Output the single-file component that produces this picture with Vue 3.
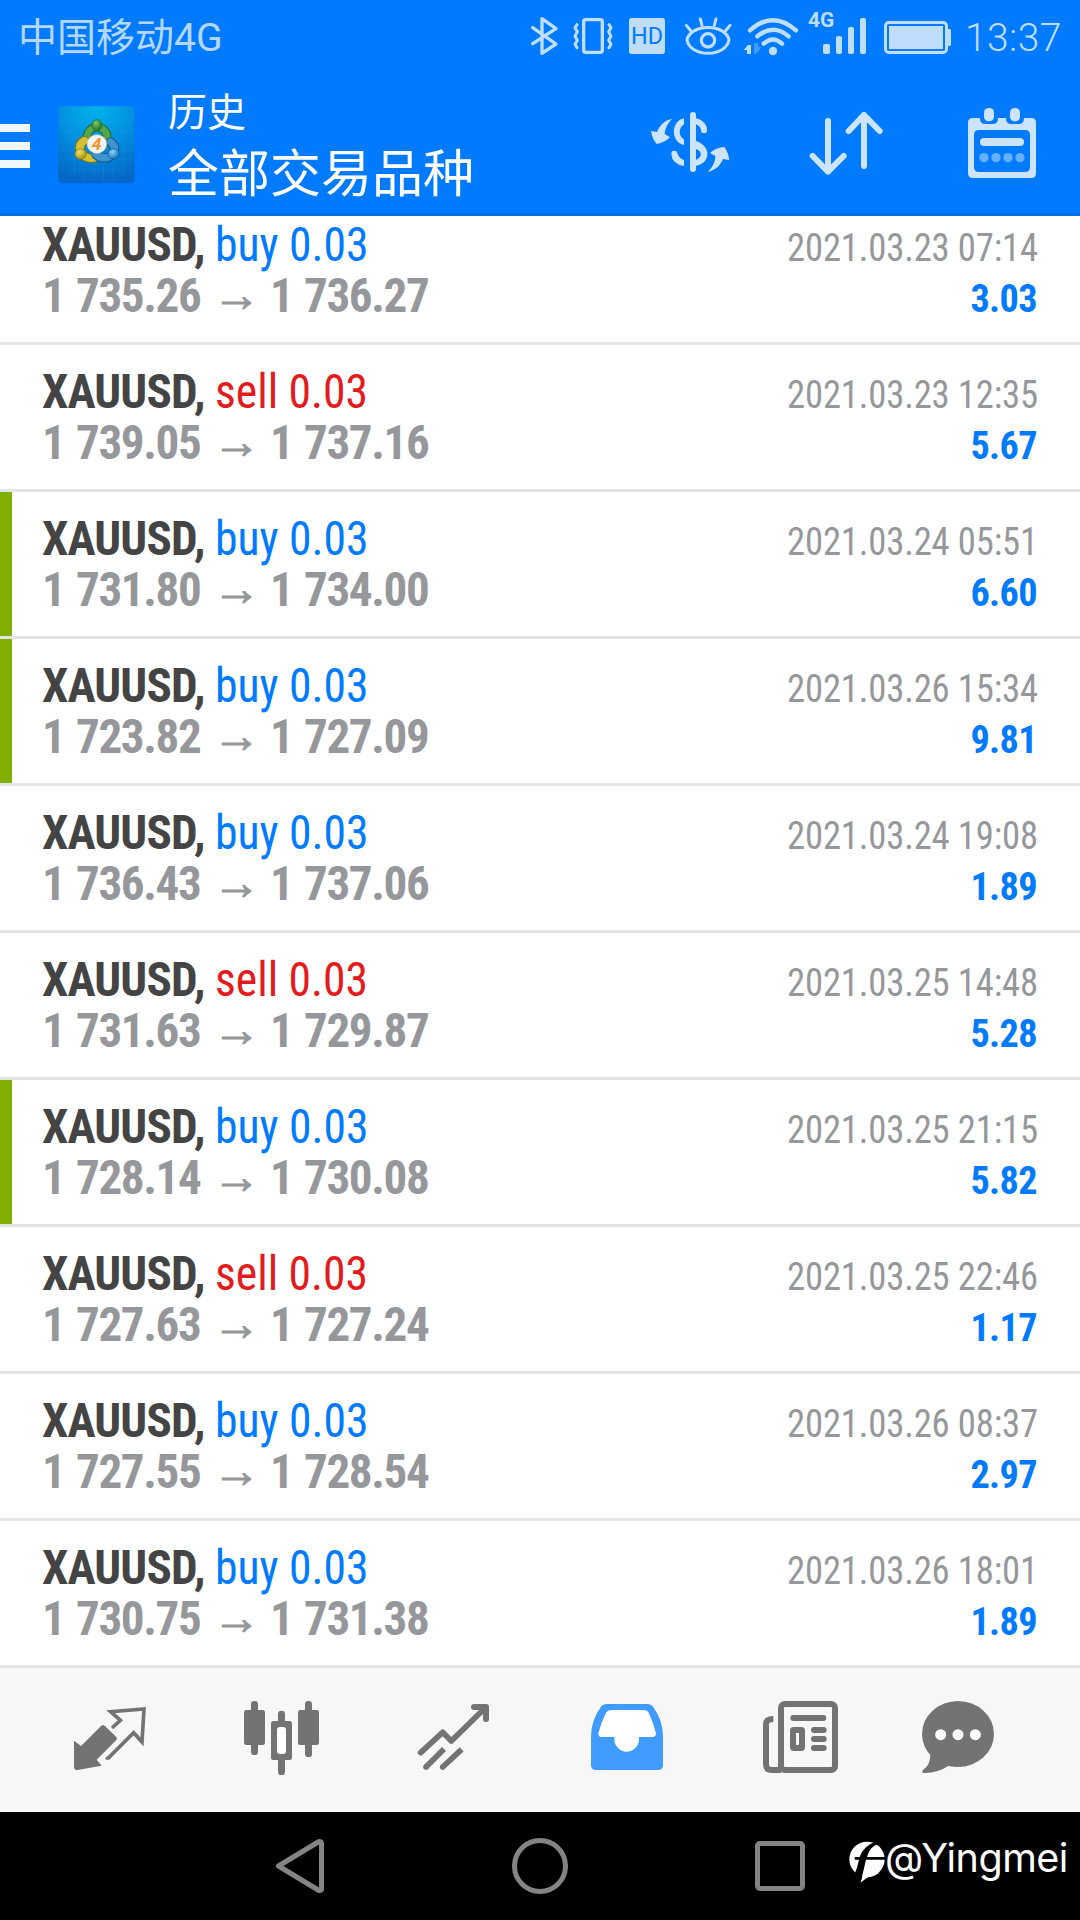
<script setup>
const deals = [
  { side: 'buy', open: '1 735.26', close: '1 736.27', time: '2021.03.23 07:14', profit: '3.03', tp: false },
  { side: 'sell', open: '1 739.05', close: '1 737.16', time: '2021.03.23 12:35', profit: '5.67', tp: false },
  { side: 'buy', open: '1 731.80', close: '1 734.00', time: '2021.03.24 05:51', profit: '6.60', tp: true },
  { side: 'buy', open: '1 723.82', close: '1 727.09', time: '2021.03.26 15:34', profit: '9.81', tp: true },
  { side: 'buy', open: '1 736.43', close: '1 737.06', time: '2021.03.24 19:08', profit: '1.89', tp: false },
  { side: 'sell', open: '1 731.63', close: '1 729.87', time: '2021.03.25 14:48', profit: '5.28', tp: false },
  { side: 'buy', open: '1 728.14', close: '1 730.08', time: '2021.03.25 21:15', profit: '5.82', tp: true },
  { side: 'sell', open: '1 727.63', close: '1 727.24', time: '2021.03.25 22:46', profit: '1.17', tp: false },
  { side: 'buy', open: '1 727.55', close: '1 728.54', time: '2021.03.26 08:37', profit: '2.97', tp: false },
  { side: 'buy', open: '1 730.75', close: '1 731.38', time: '2021.03.26 18:01', profit: '1.89', tp: false },
]
</script>

<template>
  <div class="screen">
    <header class="header">
      <div class="status">
        <span class="carrier">中国移动4G</span>
        <div class="status-icons">
          <svg class="bt" width="29" height="44" viewBox="30 39 87 132" fill="none" stroke="currentColor" stroke-width="10" stroke-linejoin="round" stroke-linecap="round">
            <path d="M38 83L108 132L66 160V56L108 86L38 131" />
          </svg>
          <svg class="vib" width="42" height="44" viewBox="156 39 126 132" fill="none" stroke="currentColor" stroke-linejoin="round" stroke-linecap="round">
            <rect x="191" y="59" width="56" height="98" rx="6" stroke-width="10" />
            <path stroke-width="9" d="M171 74L165 83L172 95L165 109L172 121L165 133L171 143M267 74L273 83L266 95L273 109L266 121L273 133L267 143" />
          </svg>
          <svg class="hd" width="38" height="44" viewBox="324 39 114 132">
            <rect x="327" y="54" width="108" height="108" rx="8" fill="currentColor" />
            <text x="381" y="132" text-anchor="middle" font-size="74" textLength="96" lengthAdjust="spacingAndGlyphs" fill="#007aff">HD</text>
          </svg>
          <svg class="eye" width="48" height="44" viewBox="492 39 144 132" fill="none" stroke="currentColor" stroke-width="9" stroke-linecap="round">
            <path d="M501 120C511 70 617 70 627 120C617 173 511 173 501 120Z" />
            <circle cx="564" cy="121" r="20" stroke-width="10" />
            <path d="M499 76L513 93M541 57L546 76M588 57L583 76M630 76L616 93" />
          </svg>
          <svg class="wifi" width="56" height="44" viewBox="669 39 168 132" fill="none" stroke="currentColor" stroke-width="13" stroke-linecap="round">
            <path d="M690 91Q759 30 828 91M712 109Q759 70 806 109M731 131Q759 106 786 131" />
            <circle cx="759" cy="153" r="12.5" fill="currentColor" stroke="none" />
            <path d="M671 150L684 135H693V162H681V150Z" fill="currentColor" stroke="none" />
            <path d="M702 129H714V138L724 142L708 162H702Z" fill="#409bff" stroke="none" />
          </svg>
          <svg class="signal" width="59" height="54" viewBox="24 9 177 162" fill="currentColor">
            <text x="24" y="80" font-size="59" font-weight="700" textLength="79" lengthAdjust="spacingAndGlyphs">4G</text>
            <rect x="69" y="132" width="21" height="30" rx="6" />
            <rect x="108" y="108" width="18" height="54" rx="6" />
            <rect x="144" y="81" width="18" height="81" rx="6" />
            <rect x="180" y="54" width="18" height="108" rx="6" />
          </svg>
          <svg class="battery" width="69" height="44" viewBox="249 39 207 132" fill="currentColor">
            <rect x="256.5" y="67.500" width="183" height="90" rx="10" fill="none" stroke="currentColor" stroke-width="9" />
            <rect x="267" y="78" width="162" height="69" />
            <path d="M444 87H449Q453 87 453 92V133Q453 138 449 138H444Z" />
          </svg>
        </div>
        <span class="clock">13:37</span>
      </div>

      <div class="toolbar">
        <div class="burger"><i></i><i></i><i></i></div>
        <svg class="logo" width="77" height="78" viewBox="168 318 222 234" preserveAspectRatio="none">
          <defs>
            <radialGradient id="tile" cx=".5" cy="0" r="1">
              <stop offset="0" stop-color="#00b4ea" />
              <stop offset=".5" stop-color="#0390e0" />
              <stop offset="1" stop-color="#0468c6" />
            </radialGradient>
            <radialGradient id="green" cx=".4" cy=".3" r=".7"><stop offset="0" stop-color="#7cc86c" /><stop offset="1" stop-color="#1f7428" /></radialGradient>
            <radialGradient id="yellow" cx=".4" cy=".3" r=".7"><stop offset="0" stop-color="#f0e260" /><stop offset="1" stop-color="#a89010" /></radialGradient>
            <radialGradient id="blue" cx=".4" cy=".3" r=".7"><stop offset="0" stop-color="#8ed3f7" /><stop offset="1" stop-color="#1272b9" /></radialGradient>
          </defs>
          <rect x="169" y="323" width="219" height="227" rx="12" fill="#0056b4" opacity=".55" />
          <rect x="169" y="319" width="219" height="226" rx="12" fill="url(#tile)" />
          <path d="M215 320V544M243 320V544M271 320V544M299 320V544M327 320V544M355 320V544M170 366H388M170 394H388M170 422H388M170 450H388M170 479H388M170 508H388" stroke="#6fd0ff" stroke-opacity=".12" stroke-width="2" fill="none" />
          <g stroke-linecap="round" fill="none">
            <path d="M252 408A29 31 0 0 1 308 402Q312 420 304 430" stroke="#1c6a2c" stroke-width="26" />
            <path d="M252 408A29 31 0 0 1 308 402Q312 420 304 430" stroke="#55a64a" stroke-width="20" />
            <path d="M244 422Q226 432 233 456Q246 478 272 474" stroke="#84760f" stroke-width="28" />
            <path d="M244 422Q226 432 233 456Q246 478 272 474" stroke="#d2c136" stroke-width="22" />
            <path d="M278 464Q292 478 316 471Q334 458 330 438L320 426" stroke="#0e5692" stroke-width="28" />
            <path d="M278 464Q292 478 316 471Q334 458 330 438L320 426" stroke="#3f94cd" stroke-width="22" />
          </g>
          <ellipse cx="280" cy="376" rx="14" ry="17" fill="url(#green)" stroke="#1c6a2c" stroke-width="2" />
          <circle cx="233" cy="462" r="16" fill="url(#yellow)" stroke="#84760f" stroke-width="2" />
          <circle cx="328" cy="462" r="16" fill="url(#blue)" stroke="#0e5692" stroke-width="2" />
          <circle cx="280" cy="432" r="28" fill="#f3f3f1" stroke="#c9cdca" stroke-width="2" />
          <text x="279" y="449" text-anchor="middle" font-size="50" font-weight="700" font-style="italic" fill="#f69328">4</text>
        </svg>
        <div class="titles">
          <div class="sub">历史</div>
          <div class="title">全部交易品种</div>
        </div>
        <div class="actions">
          <svg width="80" height="75" viewBox="90 78 240 225" fill="currentColor">
            <rect x="210" y="96" width="18" height="180" rx="9" />
            <path d="M192 115C152 122 152 188 192 195V178C175 170 175 142 192 133Z" />
            <path d="M226 115C248 118 263 136 261 151A9 9 0 0 1 243 151Q242 138 226 132Z" />
            <path d="M226 182C273 196 276 248 226 258V240C248 232 248 212 226 206Z" />
            <path d="M154 222A9 9 0 0 1 172 220Q177 235 192 240V258Q156 252 154 222Z" />
            <path d="M156 117C140 133 135 150 134 162L150 172Q134 188 110 192Q97 178 93 153L111 156C119 135 137 119 156 117Z" />
            <path d="M264 276C280 258 286 244 286 228L270 219Q288 202 313 201Q325 217 328 240L309 237C300 258 286 270 264 276Z" />
          </svg>
          <svg width="80" height="75" viewBox="561 78 240 225" fill="none" stroke="currentColor" stroke-width="18" stroke-linecap="round" stroke-linejoin="round">
            <path d="M624 123V275M578 228L624 275L671 228M732 258V105M686 153L732 105L779 153" />
          </svg>
          <svg width="72" height="75" viewBox="1038 78 216 225" fill="currentColor">
            <path fill-rule="evenodd" d="M1058 114H1080Q1080 132 1096 132H1118Q1134 132 1134 114H1158Q1158 132 1174 132H1196Q1212 132 1212 114H1234Q1248 114 1248 128V280Q1248 294 1234 294H1058Q1044 294 1044 280V128Q1044 114 1058 114ZM1077 150Q1062 150 1062 165V261Q1062 276 1077 276H1215Q1230 276 1230 261V165Q1230 150 1215 150Z" />
            <rect x="1092" y="84" width="30" height="40" rx="14" />
            <rect x="1170" y="84" width="30" height="40" rx="14" />
            <rect x="1080" y="174" width="132" height="24" rx="12" />
            <g fill="#66afff"><circle cx="1092" cy="233" r="14" /><circle cx="1128" cy="233" r="14" /><circle cx="1164" cy="233" r="14" /><circle cx="1200" cy="233" r="14" /></g>
          </svg>
        </div>
      </div>
    </header>

    <main class="list">
      <div v-for="d in deals" :key="d.open" class="deal" :class="{ tp: d.tp }">
        <div class="left">
          <div class="line"><b class="symbol">XAUUSD,</b><span class="side" :class="d.side">{{ d.side }} 0.03</span></div>
          <div class="line"><span class="price open">{{ d.open }}</span><span class="arrow">→</span><span class="price">{{ d.close }}</span></div>
        </div>
        <div class="right">
          <div class="time">{{ d.time }}</div>
          <div class="profit">{{ d.profit }}</div>
        </div>
      </div>
    </main>

    <nav class="tabs">
      <svg class="t1" width="74" height="78" viewBox="99 117 222 234">
        <path fill="currentColor" d="M102 242L123 258L184 197Q189 193 194 197L229 231Q233 236 229 240L170 299L185 317L112 330Q102 330 102 320Z" />
        <path fill="none" stroke="currentColor" stroke-width="11" d="M216 204L241 181L212 155L312 147L306 246L281 218L205 294" />
        <path fill="currentColor" d="M195 296L201 288L214 292L208 299H199Z" />
      </svg>
      <svg class="t2" width="79" height="78" viewBox="606 117 237 234" fill="currentColor">
        <rect x="633" y="123" width="21" height="162" rx="10" /><rect x="612" y="150" width="63" height="105" rx="7" />
        <rect x="714" y="152" width="21" height="193" rx="10" /><rect x="693" y="183" width="63" height="117" rx="7" />
        <rect x="711" y="201" width="27" height="81" rx="9" fill="#fff" />
        <rect x="795" y="123" width="21" height="168" rx="10" /><rect x="774" y="150" width="63" height="105" rx="7" />
      </svg>
      <svg class="t3" width="73" height="78" viewBox="111 117 219 234" fill="none" stroke="currentColor" stroke-linecap="round" stroke-linejoin="round">
        <path stroke-width="17" d="M122 278L188 217L214 243L316 143" />
        <path stroke-width="18" d="M282 141H318V177" />
        <path stroke-width="17" stroke-linecap="butt" d="M138 321L192 267M188 321L245 268" />
        <path stroke-width="17" d="M138 321h.1M188 321h.1" />
      </svg>
      <svg class="t4 active" width="74" height="78" viewBox="630 117 222 234">
        <path fill="currentColor" d="M681 132H802Q813 132 820 142Q849 182 849 230V315Q849 330 834 330H648Q633 330 633 315V230Q633 182 662 142Q669 132 681 132Z" />
        <path fill="#fff" d="M694 150H790Q802 150 806 158Q820 185 828 220Q828 231 818 231H777V238A37 37 0 0 1 703 238V231H664Q655 231 655 220Q664 185 678 158Q683 150 694 150Z" />
      </svg>
      <svg class="t5" width="77" height="78" viewBox="126 117 231 234" fill="none" stroke="currentColor" stroke-width="18">
        <rect x="183" y="132" width="162" height="198" rx="12" />
        <path d="M160 177Q138 177 138 193V312Q138 330 155 330H183" />
        <rect x="219" y="210" width="27" height="54" rx="2" />
        <path stroke-linecap="round" d="M220 174H310M282 210H311M282 237H311M282 264H311" />
      </svg>
      <svg class="t6" width="74" height="78" viewBox="603 117 222 234" fill="currentColor">
        <ellipse cx="714" cy="222" rx="108" ry="99" />
        <path d="M630 280Q634 314 609 330Q602 339 614 339Q655 339 688 316Z" />
        <g fill="#fff"><circle cx="662" cy="224" r="16.500" /><circle cx="714" cy="224" r="16.500" /><circle cx="766" cy="224" r="16.500" /></g>
      </svg>
    </nav>

    <footer class="sysnav">
      <svg class="back" width="48" height="54" viewBox="108 117 144 162" fill="none" stroke="#848484" stroke-width="15" stroke-linejoin="round"><path d="M115.500 198L237 124.500Q244.500 124.500 244.500 130V266Q244.500 271.500 237 271.500Z" /></svg>
      <div class="home"></div>
      <div class="recent"></div>
      <svg class="mark" width="36" height="44" viewBox="386 120 108 132">
        <circle cx="440" cy="178" r="53" fill="#fff" />
        <path fill="#fff" d="M420 249L430 218H478Q462 228 444 232Q434 236 420 249Z" />
        <path fill="#000" d="M403 171H418Q430 135 468 125L476 131Q448 138 440 171H494V179H437L427 222L420 249L400 240L403 222Q412 200 416 179H403Z" />
      </svg>
      <span class="author">@Yingmei</span>
    </footer>
  </div>
</template>

<style>
html, body { margin: 0; background: #fff; }
</style>

<style scoped>
.screen {
  width: 1080px;
  height: 1920px;
  display: flex;
  flex-direction: column;
  overflow: hidden;
  background: #fff;
  font-family: "Roboto Condensed", Roboto, "Noto Sans CJK SC", sans-serif;
}
svg { display: block; flex: none; }
.header {
  box-sizing: border-box;
  flex: none;
  height: 216px;
  background: #007aff;
  border-bottom: 3px solid #006fe6;
  font-family: Roboto, "Noto Sans CJK SC", sans-serif;
}
.status {
  height: 72px;
  display: flex;
  align-items: flex-start;
  color: #bfdeff;
}
.carrier {
  box-sizing: border-box;
  width: 530px;
  padding-left: 18px;
  font-size: 39px;
  line-height: 76px;
  color: #b3d7ff;
  white-space: nowrap;
}
.status-icons { display: flex; padding-top: 13px; }
.vib { margin-left: 13px; }
.hd { margin-left: 14px; }
.eye { margin-left: 18px; }
.wifi { margin-left: 11px; }
.signal { margin-left: 9px; margin-top: -10px; }
.battery { margin-left: 16px; }
.clock {
  margin-left: 13px;
  font-size: 39px;
  line-height: 76px;
  font-weight: 300;
  letter-spacing: 0.4px;
  white-space: nowrap;
}
.toolbar { display: flex; height: 141px; align-items: flex-start; }
.burger { display: flex; flex-direction: column; gap: 10px; width: 30px; padding-top: 52px; }
.burger i { display: block; height: 8px; background: #f0f7ff; }
.logo { margin: 34px 0 0 28px; }
.titles { margin-left: 33px; width: 482px; color: #fff; white-space: nowrap; }
.sub { font-size: 39px; line-height: 56px; padding-top: 13px; }
.title { font-size: 51px; line-height: 67px; }
.actions { display: flex; padding-top: 34px; color: #cce4ff; }
.actions svg:nth-child(2) { margin-left: 77px; }
.actions svg:nth-child(3) { margin-left: 79px; }

.list { flex: none; height: 1452px; overflow: hidden; font-stretch: 75%; }
.deal {
  box-sizing: border-box;
  height: 147px;
  display: flex;
  justify-content: space-between;
  padding: 0 42px;
  border-bottom: 3px solid #e4e4e4;
  background: #fff;
}
.deal:first-child { margin-top: -18px; }
.deal.tp { background: linear-gradient(#7fb000, #7fb000) 0 0 / 12px 100% no-repeat #fff; }
.left { padding-top: 21px; font-size: 48px; line-height: 51px; white-space: nowrap; }
.line { display: flex; height: 51px; }
.symbol { width: 172.5px; color: #444; letter-spacing: -0.85px; transform: scaleX(0.98); transform-origin: 0 0; }
.side { transform: scaleX(0.95); transform-origin: 0 0; }
.buy { color: #007aff; }
.sell { color: #e31b1d; }
.price { color: #96979b; font-weight: 700; letter-spacing: -1.35px; word-spacing: 2px; transform: scaleX(0.98); transform-origin: 0 0; }
.open { width: 161px; }
.arrow {
  width: 67px;
  margin-top: -1px;
  text-align: center;
  color: #96979b;
  font: 400 48px/51px "Liberation Sans", sans-serif;
  -webkit-text-stroke: 1px #96979b;
}
.right { padding-top: 25px; text-align: right; font-size: 39px; line-height: 51px; white-space: nowrap; }
.time { color: #96979b; letter-spacing: -0.17px; transform: scaleX(0.94); transform-origin: 100% 0; }
.profit { color: #007aff; font-weight: 700; letter-spacing: -0.65px; margin-right: 1px; transform: scaleX(0.98); transform-origin: 100% 0; }

.tabs {
  flex: none;
  height: 113px;
  padding-top: 31px;
  display: flex;
  background: #f7f7f7;
  color: #737373;
}
.t1 { margin-left: 73px; }
.t2 { margin-left: 95px; }
.t3 { margin-left: 96px; }
.t4 { margin-left: 100px; }
.t5 { margin-left: 98px; }
.t6 { margin-left: 82px; }
.active { color: #409bff; }

.sysnav { flex: none; height: 108px; display: flex; background: #000; align-items: flex-start; }
.back { margin: 27px 0 0 276px; }
.home { box-sizing: border-box; width: 56px; height: 56px; margin: 26px 0 0 188px; border: 5px solid #848484; border-radius: 50%; }
.recent { box-sizing: border-box; width: 50px; height: 50px; margin: 29px 0 0 187px; border: 5px solid #848484; border-radius: 5px; }
.mark { margin: 28px 0 0 44px; }
.author { color: #fff; font: 400 39.5px/60px Inter, sans-serif; letter-spacing: -0.5px; padding-top: 16px; white-space: nowrap; }
</style>
